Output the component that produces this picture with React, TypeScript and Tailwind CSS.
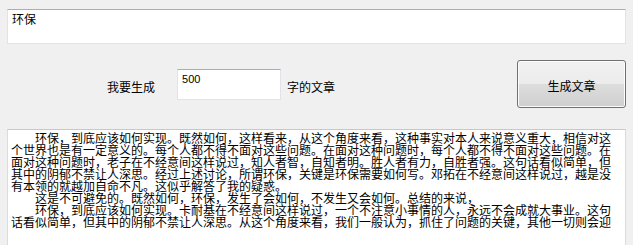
const lines = [
  { indent: true, text: '环保，到底应该如何实现。既然如何，这样看来，从这个角度来看，这种事实对本人来说意义重大，相信对这' },
  { indent: false, text: '个世界也是有一定意义的。每个人都不得不面对这些问题。在面对这种问题时，每个人都不得不面对这些问题。在' },
  { indent: false, text: '面对这种问题时，老子在不经意间这样说过，知人者智，自知者明。胜人者有力，自胜者强。这句话看似简单，但' },
  { indent: false, text: '其中的阴郁不禁让人深思。经过上述讨论，所谓环保，关键是环保需要如何写。邓拓在不经意间这样说过，越是没' },
  { indent: false, text: '有本领的就越加自命不凡。这似乎解答了我的疑惑。' },
  { indent: true, text: '这是不可避免的。既然如何，环保，发生了会如何，不发生又会如何。总结的来说，' },
  { indent: true, text: '环保，到底应该如何实现。卡耐基在不经意间这样说过，一个不注意小事情的人，永远不会成就大事业。这句' },
  { indent: false, text: '话看似简单，但其中的阴郁不禁让人深思。从这个角度来看，我们一般认为，抓住了问题的关键，其他一切则会迎' },
]

export default function App() {
  return (
    <div className="h-[245px] w-[633px] overflow-hidden bg-[#f0f0f0] px-[7px] pt-[9px] font-['Noto_Sans_CJK_SC',sans-serif] text-[12px] leading-[12px] text-black">
      {/* topic input */}
      <div className="h-[35px] border border-[#e2e3ea] border-t-[#abadb3] bg-white pl-[4px] pt-[3px]">
        环保
      </div>

      {/* length row */}
      <div className="mt-[16px] flex h-[48px] items-start">
        <span className="ml-[100px] mt-[21px]">我要生成</span>
        <div className="ml-[22px] mt-[9px] h-[31px] w-[104px] border border-[#e2e3ea] border-t-[#abadb3] bg-white pl-[4px] pt-[3px] font-['Liberation_Sans',sans-serif] text-[11px] leading-[13px]">
          500
        </div>
        <span className="ml-[6px] mt-[21px]">字的文章</span>
        <button className="ml-auto flex h-[48px] w-[109px] items-center justify-center rounded-[3px] border border-[#707070] bg-[linear-gradient(to_bottom,#f2f2f2_0%,#ebebeb_50%,#dddddd_50%,#cfcfcf_100%)] pt-[3px] text-[12px] leading-[12px] shadow-[inset_0_0_0_1px_#fcfcfc]">
          生成文章
        </button>
      </div>

      {/* generated article */}
      <div className="mt-[21px] h-[140px] border border-[#dcdcdc] border-t-[#c8c8c8] bg-white pl-[3px] pt-[2px]">
        {lines.map((l, i) => (
          <div key={i} className={`whitespace-nowrap ${l.indent ? 'pl-[24px]' : ''}`}>
            {l.text}
          </div>
        ))}
      </div>
    </div>
  )
}
